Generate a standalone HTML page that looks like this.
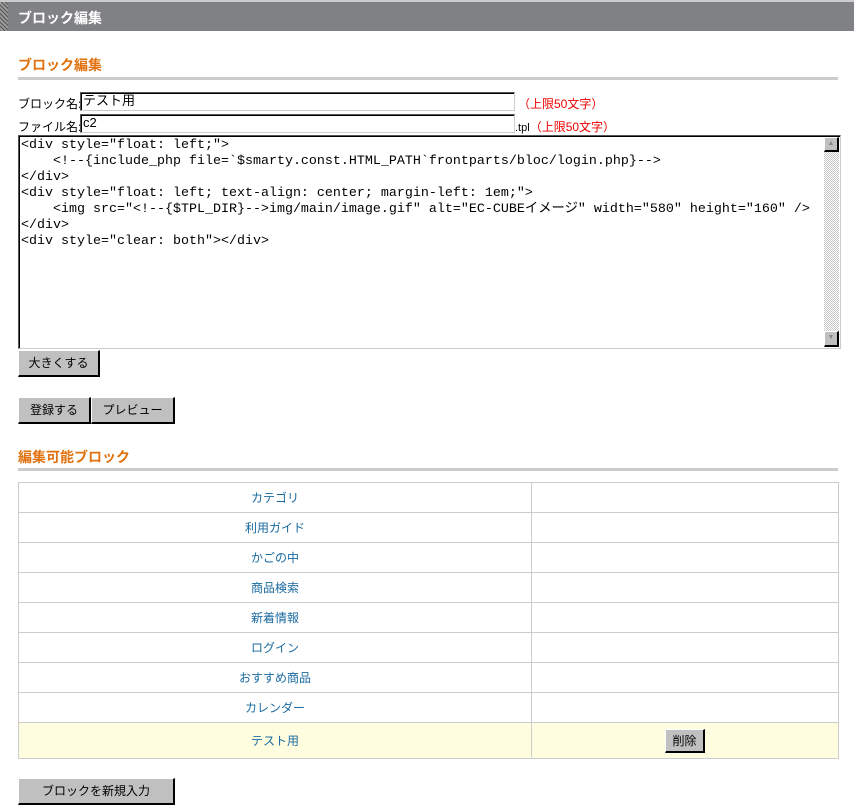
<!DOCTYPE html>
<html><head><meta charset="utf-8"><style>
body{margin:0;width:854px;height:810px;background:#fff;position:relative;font-family:"Liberation Sans","Noto Sans CJK JP",sans-serif;font-size:12px;color:#000;overflow:hidden}
.a{position:absolute}
.hdr{left:0;top:0;width:854px;height:31px;background:#808185;border-top:2px solid #ccc;box-sizing:border-box}
.hatch{left:0;top:2px;width:8px;height:29px;background:repeating-linear-gradient(45deg,#555 0 1px,#9a9a9a 1px 3px)}
.h2{color:#e0720f;font-weight:bold;font-size:14px}
.rule{left:18px;width:820px;height:3px;background:#ccc}
.inp{background:#fff;border:1px solid #555;border-right-color:#ccc;border-bottom-color:#ccc;box-shadow:inset 1px 1px 0 #000;box-sizing:border-box;font-size:13px;padding:0 2px;line-height:16px}
.red{color:#e00;font-size:12px}
.btn{background:#c0c0c0;border:1px solid #fff;border-right:2px solid #000;border-bottom:2px solid #000;box-sizing:border-box;text-align:center;font-size:12px;line-height:22px}
pre{margin:0;font-family:"Liberation Mono","Noto Sans CJK JP",monospace;font-size:13.33px;line-height:16px}
table{border-collapse:collapse;left:18px;top:482px;width:821px}
td{border:1px solid #ccc;height:29px;padding:0;text-align:center;color:#1a6aa0;font-size:12px}
</style></head><body>
<div class="a hdr"></div><div class="a hatch"></div>
<div class="a" style="left:18px;top:8px;color:#fff;font-weight:bold;font-size:14px">ブロック編集</div>
<div class="a h2" style="left:18px;top:55px">ブロック編集</div>
<div class="a rule" style="top:77px"></div>
<div class="a" style="left:18px;top:95px">ブロック名:</div>
<div class="a inp" style="left:80px;top:92px;width:435px;height:19px">テスト用</div>
<div class="a red" style="left:518px;top:95px">（上限50文字）</div>
<div class="a" style="left:18px;top:118px">ファイル名:</div>
<div class="a inp" style="left:80px;top:114px;width:435px;height:19px">c2</div>
<div class="a" style="left:515px;top:118px;font-size:11px">.tpl<span class="red">（上限50文字）</span></div>
<div class="a inp" style="left:18px;top:135px;width:823px;height:214px;padding:2px 2px;box-shadow:inset 1px 1px 0 #000">
<pre>&lt;div style="float: left;"&gt;
    &lt;!--{include_php file=`$smarty.const.HTML_PATH`frontparts/bloc/login.php}--&gt;
&lt;/div&gt;
&lt;div style="float: left; text-align: center; margin-left: 1em;"&gt;
    &lt;img src="&lt;!--{$TPL_DIR}--&gt;img/main/image.gif" alt="EC-CUBEイメージ" width="580" height="160" /&gt;
&lt;/div&gt;
&lt;div style="clear: both"&gt;&lt;/div&gt;</pre></div>
<div class="a" style="left:824px;top:137px;width:15px;height:210px;background:repeating-conic-gradient(#c8c8c8 0 25%,#fff 0 50%) 0 0/2px 2px"></div>
<div class="a btn" style="left:824px;top:137px;width:15px;height:15px;line-height:12px;font-size:7px;color:#888">▲</div>
<div class="a btn" style="left:824px;top:331px;width:15px;height:16px;line-height:12px;font-size:7px;color:#888">▼</div>
<div class="a btn" style="left:18px;top:350px;width:82px;height:27px;line-height:24px">大きくする</div>
<div class="a btn" style="left:18px;top:397px;width:73px;height:27px;line-height:24px">登録する</div>
<div class="a btn" style="left:91px;top:397px;width:84px;height:27px;line-height:24px">プレビュー</div>
<div class="a h2" style="left:18px;top:447px">編集可能ブロック</div>
<div class="a rule" style="top:468px"></div>
<table class="a">
<tr><td style="width:512px">カテゴリ</td><td></td></tr>
<tr><td>利用ガイド</td><td></td></tr>
<tr><td>かごの中</td><td></td></tr>
<tr><td>商品検索</td><td></td></tr>
<tr><td>新着情報</td><td></td></tr>
<tr><td>ログイン</td><td></td></tr>
<tr><td>おすすめ商品</td><td></td></tr>
<tr><td>カレンダー</td><td></td></tr>
<tr style="background:#fffde0"><td style="height:35px">テスト用</td><td><div class="btn" style="display:inline-block;width:40px;height:24px;color:#000;vertical-align:middle">削除</div></td></tr>
</table>
<div class="a btn" style="left:18px;top:778px;width:157px;height:27px;line-height:24px">ブロックを新規入力</div>
</body></html>
